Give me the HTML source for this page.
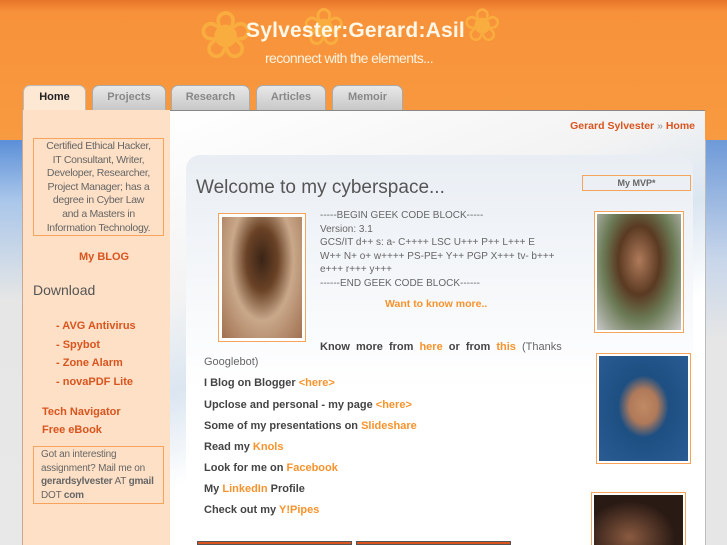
<!DOCTYPE html>
<html><head><meta charset="utf-8"><style>
*{margin:0;padding:0;box-sizing:border-box}
html,body{width:727px;height:545px;overflow:hidden}
body{position:relative;font-family:"Liberation Sans",sans-serif;background:linear-gradient(180deg,#5b8fd8 0,#5b8fd8 140px,#a9c6ea 200px,#e6e6e6 300px,#e8e8e8 100%)}
.hdr{position:absolute;left:0;top:0;width:727px;height:140px;background:linear-gradient(180deg,#e8742a 0,#f7923a 12px,#f89a40 100%)}
.leaf{position:absolute;color:#fbb040;font-size:60px;line-height:1;opacity:.9}
.title{position:absolute;left:246px;top:19px;color:#fff8e8;font-size:21px;font-weight:bold;letter-spacing:.2px}
.sub{position:absolute;left:265px;top:50px;color:#fff3e0;font-size:14px;letter-spacing:-.6px}
.tab{position:absolute;top:85px;height:25px;border-radius:7px 7px 0 0;background:linear-gradient(#e8e8e8,#c8c8c8);border:1px solid #aaa;border-bottom:none;font-size:11px;font-weight:bold;color:#888;text-align:center;line-height:22px}
.side{position:absolute;left:22px;top:110px;width:148px;height:435px;background:#fde0c6;border-left:1px solid #c7a890}
.main{position:absolute;left:170px;top:110px;width:535px;height:435px;background:linear-gradient(160deg,#fff 0,#f3f3f3 30%,#dbe6f1 45%,#fff 60%,#fff 100%);border-top:1px solid #888}
.right{position:absolute;left:705px;top:140px;width:22px;height:405px;background:linear-gradient(180deg,#6e9ad8,#c8d6ea 120px,#e6e6e6 200px);border-left:1px solid #bbb}
.box{position:absolute;border:1px solid #f6a45c;font-size:10.5px;color:#666}
.o{color:#f7932c;font-weight:bold}
.r{color:#d9541e;font-weight:bold}
.inner{position:absolute;left:186px;top:155px;width:507px;height:390px;background:linear-gradient(180deg,#e9eef4,#fff 60%);border-radius:14px 14px 0 0}
.ph{position:absolute;border:1px solid #f6a45c;padding:3px;background:#fff}
.ln{position:absolute;left:204px;font-size:11px;font-weight:bold;color:#444}
</style></head><body>
<div class="hdr">
<div class="leaf" style="left:198px;top:2px;font-size:66px">❀</div>
<div class="leaf" style="left:302px;top:2px;font-size:52px">❀</div>
<div class="leaf" style="left:463px;top:2px;font-size:46px">❀</div>
<div class="title">Sylvester:Gerard:Asil</div>
<div class="sub">reconnect with the elements...</div>
<div class="tab" style="left:23px;width:63px;background:#fde8d4;color:#222;border-color:#bbb">Home</div>
<div class="tab" style="left:92px;width:74px">Projects</div>
<div class="tab" style="left:171px;width:79px">Research</div>
<div class="tab" style="left:256px;width:70px">Articles</div>
<div class="tab" style="left:332px;width:71px">Memoir</div>
</div>
<div class="side">
<div class="box" style="left:10px;top:28px;width:131px;height:98px;text-align:center;line-height:13.6px;padding-top:1px;font-size:10.5px;letter-spacing:-.3px;white-space:nowrap">Certified Ethical Hacker,<br>IT Consultant, Writer,<br>Developer, Researcher,<br>Project Manager; has a<br>degree in Cyber Law<br>and a Masters in<br>Information Technology.</div>
<div class="r" style="position:absolute;left:56px;top:141px;font-size:11px">My BLOG</div>
<div style="position:absolute;left:10px;top:172px;font-size:14px;color:#555">Download</div>
<div class="r" style="position:absolute;left:33px;top:207px;font-size:11px;line-height:18.5px">- AVG Antivirus<br>- Spybot<br>- Zone Alarm<br>- novaPDF Lite</div>
<div class="r" style="position:absolute;left:19px;top:293px;font-size:11px;line-height:18px">Tech Navigator<br>Free eBook</div>
<div class="box" style="left:10px;top:336px;width:131px;height:58px;padding:1px 7px;line-height:13.6px;font-size:10px;letter-spacing:-.2px;white-space:nowrap">Got an interesting<br>assignment? Mail me on<br><b>gerardsylvester</b> AT <b>gmail</b><br>DOT <b>com</b></div>
</div>
<div class="main">
<div class="r" style="position:absolute;right:10px;top:9px;font-size:10.5px">Gerard Sylvester <span style="color:#aaa">»</span> Home</div>
</div>
<div class="right"></div>
<div class="inner"></div>
<div style="position:absolute;left:196px;top:177px;font-size:19px;color:#555">Welcome to my cyberspace...</div>
<div class="box" style="left:582px;top:175px;width:109px;height:16px;text-align:center;font-size:9px;font-weight:bold;line-height:14px">My MVP*</div>
<div class="ph" style="left:218px;top:213px;width:88px;height:129px"><div style="width:80px;height:121px;background:radial-gradient(ellipse at 50% 35%,#3a2416 0,#6a4226 28%,#c9a88a 55%,#a07050 100%)"></div></div>
<div style="position:absolute;left:320px;top:209px;font-size:10px;color:#666;line-height:13.6px;width:235px">-----BEGIN GEEK CODE BLOCK-----<br>Version: 3.1<br>GCS/IT d++ s: a- C++++ LSC U+++ P++ L+++ E W++ N+ o+ w++++ PS-PE+ Y++ PGP X+++ tv- b+++ e+++ r+++ y+++<br>------END GEEK CODE BLOCK------</div>
<div class="o" style="position:absolute;left:385px;top:298px;font-size:10.5px">Want to know more..</div>
<div style="position:absolute;left:320px;top:341px;font-size:11px;color:#444;word-spacing:3px"><b>Know more from <span class="o">here</span> or from <span class="o">this</span></b> <span style="color:#666;word-spacing:0">(Thanks</span></div>
<div style="position:absolute;left:204px;top:356px;font-size:11px;color:#666">Googlebot)</div>
<div class="ln" style="top:377px">I Blog on Blogger <span class="o">&lt;here&gt;</span></div>
<div class="ln" style="top:399px">Upclose and personal - my page <span class="o">&lt;here&gt;</span></div>
<div class="ln" style="top:420px">Some of my presentations on <span class="o">Slideshare</span></div>
<div class="ln" style="top:441px">Read my <span class="o">Knols</span></div>
<div class="ln" style="top:462px">Look for me on <span class="o">Facebook</span></div>
<div class="ln" style="top:483px">My <span class="o">LinkedIn</span> Profile</div>
<div class="ln" style="top:504px">Check out my <span class="o">Y!Pipes</span></div>
<div class="ph" style="left:594px;top:211px;width:90px;height:122px;padding:2px"><div style="width:84px;height:116px;background:radial-gradient(ellipse at 50% 40%,#b07a5a 0,#5a3a22 35%,#6b7a55 60%,#c8c8c8 100%)"></div></div>
<div class="ph" style="left:596px;top:353px;width:95px;height:111px;padding:2px"><div style="width:89px;height:105px;background:radial-gradient(ellipse at 50% 48%,#c08a64 0,#b07a5a 22%,#1e4f82 40%,#2a5c94 100%)"></div></div>
<div class="ph" style="left:591px;top:492px;width:95px;height:60px;padding:2px"><div style="width:89px;height:60px;background:radial-gradient(ellipse at 40% 70%,#8a5a40,#2a1a14 60%)"></div></div>
<div style="position:absolute;left:197px;top:541px;width:155px;height:4px;background:#d9541e;border:1px solid #555"></div>
<div style="position:absolute;left:356px;top:541px;width:155px;height:4px;background:#d9541e;border:1px solid #555"></div>
</body></html>
